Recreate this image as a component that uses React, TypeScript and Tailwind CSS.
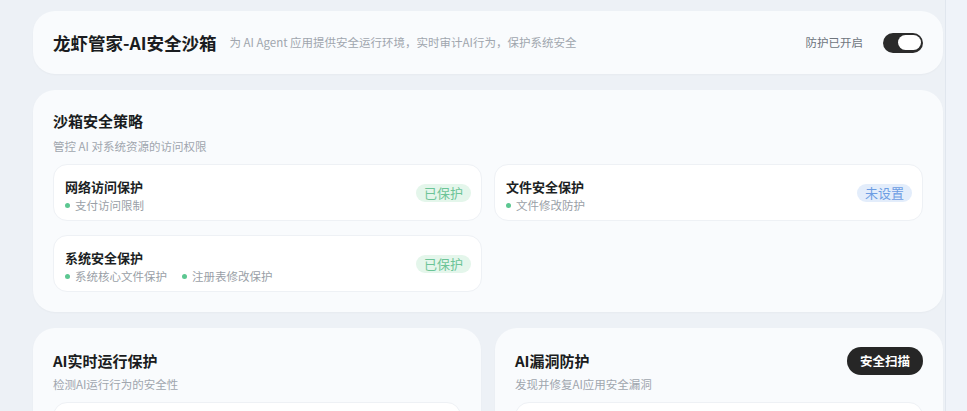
import React from "react";

function Dot() {
  return <span className="inline-block w-[5px] h-[5px] rounded-full bg-[#5cc791] shrink-0" />;
}

function Badge({ kind }: { kind: "ok" | "unset" }) {
  return kind === "ok" ? (
    <span className="self-center h-[18px] px-2 rounded-full bg-[#e4f6eb] text-[#6cc497] text-[13px] leading-[18px]">已保护</span>
  ) : (
    <span className="self-center h-[18px] px-2 rounded-full bg-[#e3edfb] text-[#6d9de3] text-[13px] leading-[18px]">未设置</span>
  );
}

function PolicyCard({ title, items, kind }: { title: string; items: string[]; kind: "ok" | "unset" }) {
  return (
    <div className="h-[57px] rounded-[14px] bg-white border border-[#eef1f5] pl-[11px] pr-[10px] flex items-start justify-between">
      <div className="pt-[13px]">
        <div className="text-[13px] font-bold leading-[18px] text-[#1c1f24]">{title}</div>
        <div className="mt-[1px] flex items-center gap-[15px]">
          {items.map((it) => (
            <span key={it} className="flex items-center gap-[5px] text-[11.5px] leading-[16px] text-[#9a9fa7]">
              <Dot />
              {it}
            </span>
          ))}
        </div>
      </div>
      <Badge kind={kind} />
    </div>
  );
}

export default function App() {
  return (
    <div className="flex min-h-screen bg-[#edf1f6] font-['Noto_Sans_CJK_SC','Noto_Sans',sans-serif]">
      <main className="flex-1 pl-[33px] pr-[2px] pt-[11px] flex flex-col gap-4 pb-6">
        <header className="h-[63px] rounded-[22px] bg-[#f9fbfd] px-5 flex items-center justify-between shadow-[0_1px_2px_rgba(15,23,42,0.03)]">
          <div className="flex items-center">
            <h1 className="text-[17.5px] font-bold text-[#1a1c20] leading-[26px]">龙虾管家-AI安全沙箱</h1>
            <span className="ml-[13px] text-[11.5px] text-[#a0a6ae]">为 AI Agent 应用提供安全运行环境，实时审计AI行为，保护系统安全</span>
          </div>
          <div className="flex items-center gap-5">
            <span className="text-[11.5px] text-[#6f757d]">防护已开启</span>
            <div className="w-10 h-5 rounded-full bg-[#2b2b2b] p-[2px] flex justify-end items-center">
              <div className="w-[23px] h-[15px] rounded-full bg-white" />
            </div>
          </div>
        </header>

        <section className="rounded-[22px] bg-[#f9fbfd] px-5 pt-5 pb-5 shadow-[0_1px_2px_rgba(15,23,42,0.03)]">
          <h2 className="text-[15px] font-bold leading-[22px] text-[#1a1c20]">沙箱安全策略</h2>
          <p className="mt-[5px] text-[11.5px] leading-[18px] text-[#a0a6ae]">管控 AI 对系统资源的访问权限</p>
          <div className="mt-[9px] grid grid-cols-2 gap-x-3 gap-y-[14px]">
            <PolicyCard title="网络访问保护" items={["支付访问限制"]} kind="ok" />
            <PolicyCard title="文件安全保护" items={["文件修改防护"]} kind="unset" />
            <PolicyCard title="系统安全保护" items={["系统核心文件保护", "注册表修改保护"]} kind="ok" />
          </div>
        </section>

        <div className="grid grid-cols-2 gap-[14px]">
          <section className="rounded-[22px] bg-[#f9fbfd] px-5 pt-[19px] pb-5 shadow-[0_1px_2px_rgba(15,23,42,0.03)]">
            <div className="h-7 flex items-center justify-between">
              <h2 className="text-[15px] font-bold leading-[22px] text-[#1a1c20]">AI实时运行保护</h2>
            </div>
            <p className="text-[11.5px] leading-[18px] text-[#a0a6ae]">检测AI运行行为的安全性</p>
            <div className="mt-[9px] h-[120px] rounded-[14px] bg-white border border-[#eef1f5]" />
          </section>
          <section className="rounded-[22px] bg-[#f9fbfd] px-5 pt-[19px] pb-5 shadow-[0_1px_2px_rgba(15,23,42,0.03)]">
            <div className="h-7 flex items-center justify-between">
              <h2 className="text-[15px] font-bold leading-[22px] text-[#1a1c20]">AI漏洞防护</h2>
              <button className="h-7 px-[13px] rounded-full bg-[#262626] text-white text-[12.5px] font-bold">安全扫描</button>
            </div>
            <p className="text-[11.5px] leading-[18px] text-[#a0a6ae]">发现并修复AI应用安全漏洞</p>
            <div className="mt-[9px] h-[120px] rounded-[14px] bg-white border border-[#eef1f5]" />
          </section>
        </div>
      </main>
      <aside className="w-[22px] shrink-0 border-l border-[#e0e6ee] bg-[#eff3f9]" />
    </div>
  );
}
